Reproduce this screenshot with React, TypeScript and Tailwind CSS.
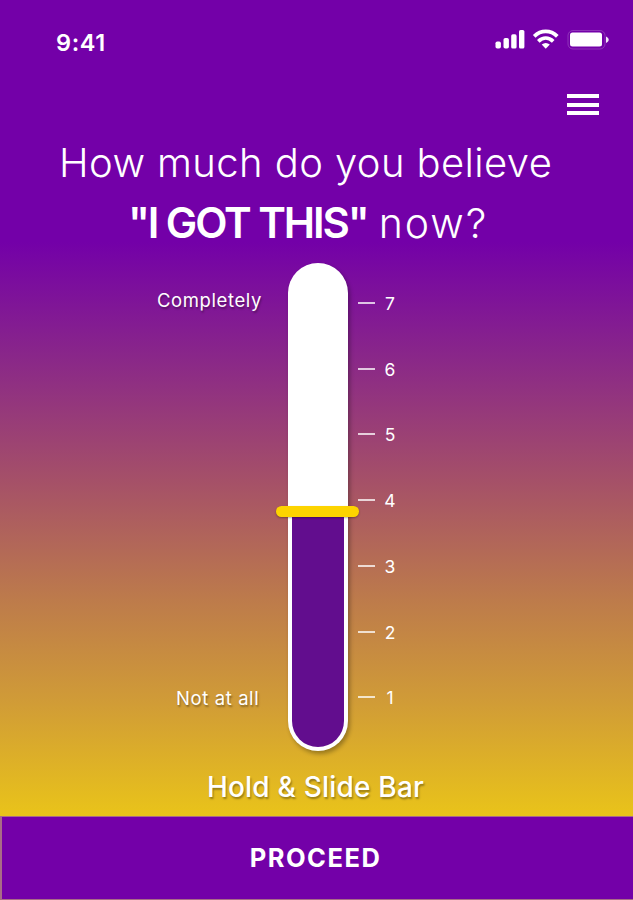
import React from 'react';

const levels = [7, 6, 5, 4, 3, 2, 1];

function StatusBar() {
  return (
    <div className="flex h-[84px] items-start justify-between pl-[56px] pr-[24px]">
      <span className="mt-[29px] text-[23.5px] leading-[28px] font-semibold tracking-[0.6px]">9:41</span>
      <svg className="mt-[28px]" width="114" height="24" viewBox="0 0 114 24" fill="#fff">
        <rect x="0.5" y="13.5" width="5.4" height="7" rx="1.8" />
        <rect x="8.5" y="10" width="5.4" height="10.5" rx="1.8" />
        <rect x="16.2" y="6.3" width="5.4" height="14.2" rx="1.6" />
        <rect x="24" y="2" width="5.4" height="18.5" rx="1.6" />
        <g fill="none" stroke="#fff" strokeWidth="3.8">
          <path d="M39.2 8.4C46 1.8 55.5 1.8 62.3 8.4" />
          <path d="M43.3 13.3C47.8 9.1 53.7 9.1 58.2 13.3" />
        </g>
        <path d="M46.7 16.6C49.3 14.6 52.2 14.6 54.8 16.6L50.75 20.8Z" />
        <rect x="73" y="2.5" width="37" height="18.5" rx="5" fill="none" stroke="#fff" strokeOpacity="0.2" />
        <rect x="75" y="4.5" width="32" height="14" rx="2.5" />
        <path d="M111 8.5C114.6 10 114.6 13.5 111 15Z" opacity="0.9" />
      </svg>
    </div>
  );
}

function Slider() {
  return (
    <div className="relative h-[488px] w-[60px] rounded-full bg-white shadow-[2px_3px_4px_rgba(0,0,0,0.3)]">
      <div className="absolute bottom-[4px] left-[4px] h-[232px] w-[52px] rounded-b-full bg-[#620d8e]" />
      <div className="absolute top-[243px] -left-[12px] h-[11px] w-[83px] rounded-full bg-[#fdd400] shadow-[0_1px_2px_rgba(0,0,0,0.3)]" />
    </div>
  );
}

export default function App() {
  return (
    <div className="flex h-[900px] w-[633px] flex-col overflow-hidden bg-[linear-gradient(180deg,#7300a8_0px,#7300a8_242px,#8a2888_360px,#a55068_480px,#bd7b4b_600px,#d09b37_700px,#e9c31a_815px)] font-['Inter',sans-serif] text-white">
      <StatusBar />
      <div className="flex h-[46px] justify-end pr-[34px]">
        <button className="mt-[10px] flex h-[21px] w-[32px] flex-col justify-between" aria-label="Menu">
          <span className="h-[4px] w-full bg-white" />
          <span className="h-[4px] w-full bg-white" />
          <span className="h-[4px] w-full bg-white" />
        </button>
      </div>

      <h1 className="flex h-[133px] flex-col text-[40px] leading-[60px] font-light whitespace-nowrap">
        <span className="pt-[3px] pl-[59px] tracking-[0.4px]">How much do you believe</span>
        <span className="flex gap-[11px] pl-[128px]">
          <b className="text-[42px] font-semibold tracking-[-2.1px]">"I GOT THIS"</b>
          <span className="text-[41px] tracking-[2px]">now?</span>
        </span>
      </h1>

      <div className="flex h-[488px]">
        <div className="flex w-[288px] flex-col justify-between pt-[23px] pb-[39px] text-[18.5px] leading-[28px] tracking-[0.6px] [text-shadow:1px_2px_2px_rgba(0,0,0,0.35)]">
          <span className="pl-[157px]">Completely</span>
          <span className="pl-[176px]">Not at all</span>
        </div>
        <Slider />
        <ul className="flex flex-col pt-[7px] pl-[10px]">
          {levels.map((level) => (
            <li key={level} className="flex h-[65.75px] items-center text-[17.5px]">
              <span className="h-[2px] w-[17px] bg-white/75" />
              <span className="ml-[9px] w-[12px] pt-[2px] text-center">{level}</span>
            </li>
          ))}
        </ul>
      </div>

      <p className="h-[65px] pt-[18px] pr-[2px] text-center text-[28px] leading-[36px] font-medium tracking-[0.2px] [text-shadow:1px_2px_2px_rgba(0,0,0,0.35)]">
        Hold &amp; Slide Bar
      </p>
      <button className="h-[84px] w-full border-t border-b border-l-2 border-[#a96b87] bg-[#7300a8] pr-[4px] text-[25.5px] font-bold tracking-[1.5px]">
        PROCEED
      </button>
    </div>
  );
}
